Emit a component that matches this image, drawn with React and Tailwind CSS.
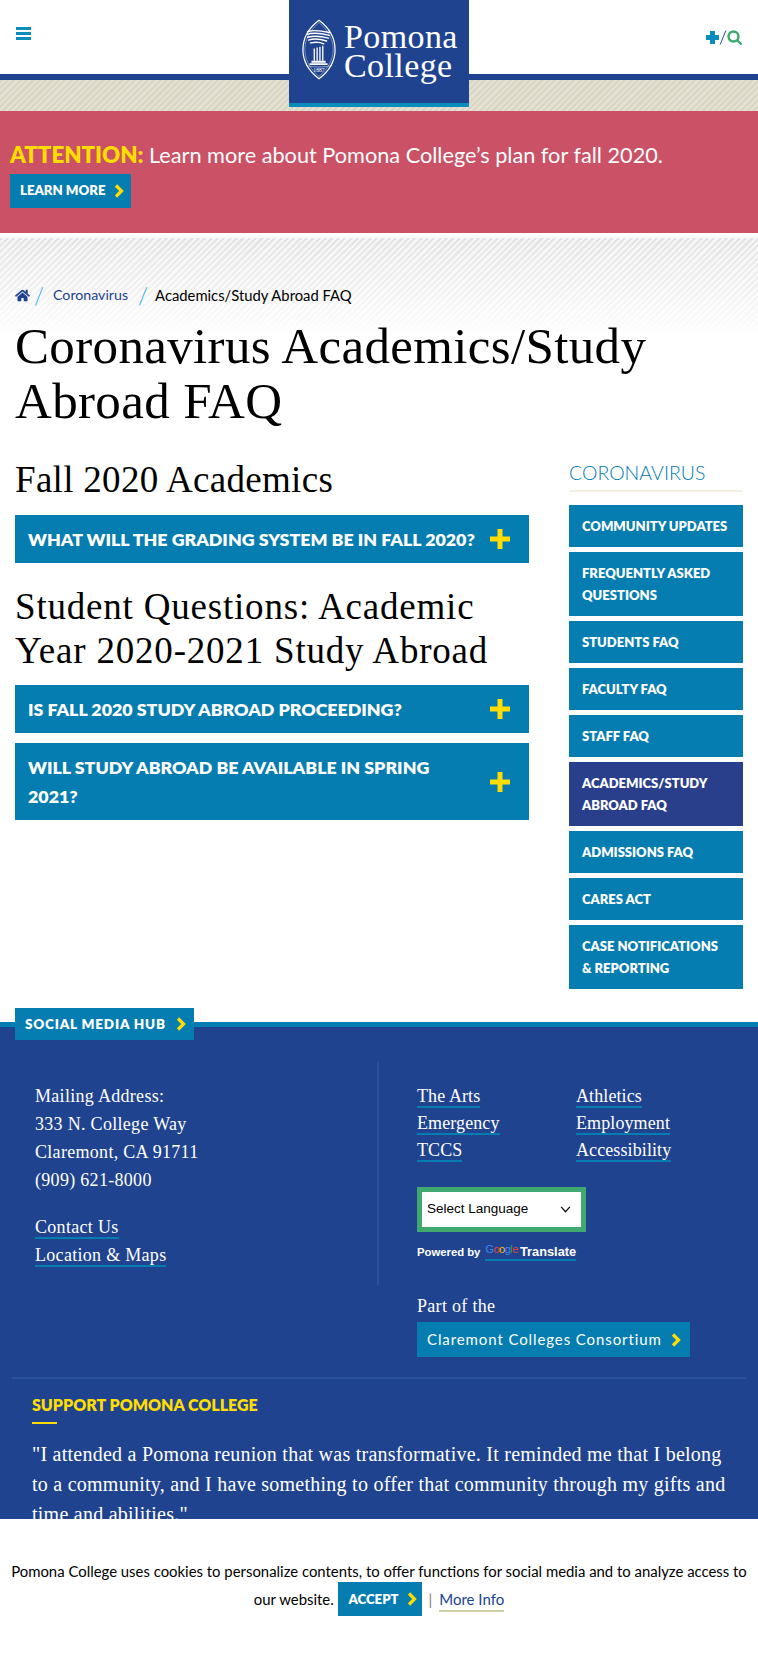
import React from "react";
import { FaHome } from "react-icons/fa";

const Chevron = ({ className = "w-[10px] h-[14px]" }) => (
  <svg viewBox="0 0 10 14" className={`${className} shrink-0`} fill="none" stroke="#ffdd00" strokeWidth="3.2">
    <path d="M2 1.500 L7.500 7 L2 12.500" />
  </svg>
);

const Plus = () => (
  <svg viewBox="0 0 20 20" className="w-5 h-5 shrink-0" fill="#ffdd00">
    <path d="M7.500 0h5v7.500H20v5h-7.500V20h-5v-7.500H0v-5h7.500z" />
  </svg>
);

const Seal = () => (
  <svg viewBox="0 0 36 64" className="w-[34px] h-[63px] shrink-0" fill="none" stroke="#fff">
    <path d="M18 1 C6 10 1 21 1 32 C1 43 6 54 18 63 C30 54 35 43 35 32 C35 21 30 10 18 1Z" strokeWidth="1.3" />
    <path d="M18 3.500 C8 12 3 22 3 32 C3 42 8 52 18 60.500 C28 52 33 42 33 32 C33 22 28 12 18 3.500Z" strokeWidth="0.4" />
    <g strokeWidth="1.500" strokeLinecap="round">
      <path d="M6 13 C12 11 20 12 29 14" />
      <path d="M5 16 C12 14 21 15 29 17" />
      <path d="M6 19 C13 17 21 18 28 20" />
      <path d="M7 22 C13 20 20 21 26 23" />
      <path d="M9 25 C14 24 19 24 23 26" />
    </g>
    <g strokeWidth="1.400">
      <path d="M13 31 V44" />
      <path d="M16 30 V44" />
      <path d="M19 29 V44" />
      <path d="M22 28 V44" />
    </g>
    <path d="M10 44 H25 V46 H10Z M8 46.500 H27 V48.500 H8Z" fill="#fff" stroke="none" />
    <path d="M4 49 C12 51 24 51 32 49" strokeWidth="0.5" />
    <text x="18" y="56" textAnchor="middle" fontSize="6" fill="#fff" stroke="none" fontFamily="Liberation Serif, serif">1887</text>
  </svg>
);

const FooterLink = ({ children }) => (
  <a className="border-b-2 border-[#057db1] leading-[20px] inline-block">{children}</a>
);

const futura = "font-['Lato',sans-serif]";
const serif = "font-['Liberation_Serif',serif]";

const side = [
  ["COMMUNITY UPDATES", false],
  ["FREQUENTLY ASKED QUESTIONS", false],
  ["STUDENTS FAQ", false],
  ["FACULTY FAQ", false],
  ["STAFF FAQ", false],
  ["ACADEMICS/STUDY ABROAD FAQ", true],
  ["ADMISSIONS FAQ", false],
  ["CARES ACT", false],
  ["CASE NOTIFICATIONS & REPORTING", false],
];

const Accordion = ({ children }) => (
  <div className={`bg-[#057db1] text-white font-extrabold ${futura} text-[17.800px] leading-[29px] pl-[13px] pr-[19px] py-[9.500px] flex items-center justify-between gap-3`}>
    <span>{children}</span>
    <Plus />
  </div>
);

export default function App() {
  return (
    <div className={`relative h-[1656px] w-full overflow-hidden bg-white ${futura}`}>
      <header className="relative">
        <div className="h-[74px] bg-white flex items-start justify-between pl-4 pr-[16px]">
          <div className="mt-[27px] flex flex-col gap-[2px] w-[15px]">
            <span className="h-[3px] bg-[#0a8cbc]" />
            <span className="h-[3px] bg-[#0a8cbc]" />
            <span className="h-[3px] bg-[#0a8cbc]" />
          </div>
          <div className="mt-[30px] flex items-center">
            <svg viewBox="0 0 13 13" className="w-[13px] h-[13px]" fill="#0a8cbc"><path d="M4 0h5v4h4v5H9v4H4V9H0V4h4z" /></svg>
            <svg viewBox="0 0 8 16" className="w-2 h-[15px]"><path d="M7 0.500 L1 15.500" stroke="#20438f" strokeWidth="1" /></svg>
            <svg viewBox="0 0 15 15" className="w-[15px] h-[15px]" fill="none" stroke="#3fa96f" strokeWidth="2.400"><circle cx="6.500" cy="6.500" r="5" /><path d="M10 10 L14.500 14.500" /></svg>
          </div>
        </div>
        <div className="h-[6px] bg-[#20438f]" />
        <div className="h-[31px] bg-[repeating-linear-gradient(135deg,#d9d6c6_0,#d9d6c6_2.250px,#e4e1d3_2.250px,#e4e1d3_4.500px)]" />
        <div className="absolute left-[289px] top-0 w-[180px] h-[107px] bg-[#20438f] border-b-4 border-[#0a8cbc] flex items-start pl-[13px] pt-[18px] gap-[8px]">
          <Seal />
          <div className={`${serif} text-white text-[34px] leading-[29px] mt-[4px] tracking-[0.4px]`}>
            <div>Pomona</div>
            <div>College</div>
          </div>
        </div>
      </header>

      <section className="h-[122px] bg-[#cb5166] pl-[10px] pt-[29px]">
        <div className="text-[21.700px] leading-[30px] text-white whitespace-nowrap">
          <span className="font-extrabold text-[22.300px] text-[#ffdd00]">ATTENTION:</span> Learn more about Pomona College’s plan for fall 2020.
        </div>
        <a className="mt-[4px] h-[34px] w-[121px] bg-[#057db1] text-white font-extrabold text-[13.200px] flex items-center pl-[10px] gap-[9px]">
          LEARN MORE <Chevron />
        </a>
      </section>

      <div className="h-[5px] bg-white" />

      <main className="bg-[linear-gradient(to_bottom,transparent_0,#ffffff_100px),repeating-linear-gradient(135deg,#e4e4e4_0,#e4e4e4_2.250px,#f6f6f6_2.250px,#f6f6f6_4.500px)] bg-[length:100%_100px,100%_100px] bg-no-repeat px-[15px] pt-[47px]">
        <nav className="flex items-center h-[20px] text-black">
          <FaHome className="text-[#20438f] w-[15px] h-[15px]" />
          <span className="text-[#2aa8e8] text-[23px] font-light ml-[4px] mr-[9px]">/</span>
          <a className="text-[#20438f] text-[14.200px]">Coronavirus</a>
          <span className="text-[#2aa8e8] text-[23px] font-light ml-[10px] mr-[7px]">/</span>
          <span className="text-[14.800px]">Academics/Study Abroad FAQ</span>
        </nav>
        <h1 className={`${serif} text-[51px] leading-[55px] text-black mt-[14px] tracking-[0.35px]`}>
          Coronavirus Academics/Study Abroad FAQ
        </h1>
        <div className="flex justify-between mt-[28px]">
          <div className="w-[514px] pt-[1px]">
            <h2 className={`${serif} text-[37px] leading-[44px] text-black tracking-[0.3px]`}>Fall 2020 Academics</h2>
            <div className="mt-[13px]"><Accordion>WHAT WILL THE GRADING SYSTEM BE IN FALL 2020?</Accordion></div>
            <h2 className={`${serif} text-[37px] leading-[44px] text-black tracking-[0.8px] max-w-[490px] mt-[22px]`}>
              Student Questions: Academic Year 2020-2021 Study Abroad
            </h2>
            <div className="mt-[12px] flex flex-col gap-[10px]">
              <Accordion>IS FALL 2020 STUDY ABROAD PROCEEDING?</Accordion>
              <Accordion>WILL STUDY ABROAD BE AVAILABLE IN SPRING 2021?</Accordion>
            </div>
          </div>
          <aside className="w-[174px]">
            <div className="text-[#057db1] text-[19.500px] font-light leading-[32px] pb-[1px] border-b-2 border-[#f3efe4]">CORONAVIRUS</div>
            <div className="mt-[13px] flex flex-col gap-[5px]">
              {side.map(([t, active]) => (
                <a key={t} className={`${active ? "bg-[#2a3f8c]" : "bg-[#057db1]"} text-white font-extrabold text-[13px] leading-[22px] px-[13px] py-[10px]`}>{t}</a>
              ))}
            </div>
          </aside>
        </div>
      </main>

      <footer className={`relative mt-[33px] border-t-[5px] border-[#057db1] bg-[#20438f] text-white ${serif}`}>
        <a className={`absolute left-[15px] -top-[19px] h-[32px] w-[179px] bg-[#057db1] flex items-center pl-[10px] gap-[10px] ${futura} font-extrabold text-[13.500px] tracking-[0.8px]`}>
          SOCIAL MEDIA HUB <Chevron />
        </a>
        <div className="flex pt-[35px]">
          <div className="w-[379px] h-[223px] border-r-2 border-[#2a5299] pl-[35px] pt-[20px] text-[18px] leading-[28px] tracking-[0.3px]">
            <p>Mailing Address:</p>
            <p>333 N. College Way</p>
            <p>Claremont, CA 91711</p>
            <p>(909) 621-8000</p>
            <div className="mt-[19px] flex flex-col items-start">
              <div className="h-[28px]"><FooterLink>Contact Us</FooterLink></div>
              <div className="h-[28px]"><FooterLink>Location &amp; Maps</FooterLink></div>
            </div>
          </div>
          <div className="pl-[38px] pt-[23px]">
            <div className="grid grid-cols-[159px_1fr] gap-y-[5px] text-[18px] leading-[22px] tracking-[0.1px]">
              {["The Arts", "Athletics", "Emergency", "Employment", "TCCS", "Accessibility"].map((t) => (
                <div key={t} className="h-[22px]"><FooterLink>{t}</FooterLink></div>
              ))}
            </div>
            <div className="mt-[26px] w-[169px] h-[45px] border-[5px] border-[#3fa96f] bg-white flex items-center justify-between pl-[5px] pr-[10px] text-black font-['Liberation_Sans',sans-serif] text-[13.500px]">
              <span>Select Language</span>
              <svg viewBox="0 0 12 8" className="w-[11px] h-[7px]" fill="none" stroke="#111" strokeWidth="1.500"><path d="M1 1 L6 6.500 L11 1" /></svg>
            </div>
            <div className="mt-[12px] flex items-center font-['Liberation_Sans',sans-serif] font-bold text-[11.300px] leading-[15px]">
              <span>Powered by</span>
              <span className="ml-[5px] inline-flex items-center border-b-2 border-[#057db1]">
                <span className="font-normal text-[11px] tracking-[-0.5px] -mt-1 mr-[2px]">
                  <span className="text-[#4285f4]">G</span><span className="text-[#ea4335]">o</span><span className="text-[#fbbc05]">o</span><span className="text-[#4285f4]">g</span><span className="text-[#34a853]">l</span><span className="text-[#ea4335]">e</span>
                </span>
                <span className="text-[12.800px]">Translate</span>
              </span>
            </div>
          </div>
        </div>
        <div className="pl-[417px] pt-[9px]">
          <p className="text-[18px] leading-[24px] tracking-[0.3px]">Part of the</p>
          <a className={`mt-[4px] h-[35px] w-[273px] bg-[#057db1] flex items-center pl-[10px] gap-[9px] ${futura} text-[15px] tracking-[0.9px]`}>
            Claremont Colleges Consortium <Chevron />
          </a>
        </div>
        <div className="mx-3 mt-[20px] h-[2px] bg-[#2a5299]" />
        <div className="pl-[32px] pr-[20px] pt-[14px]">
          <h3 className={`${futura} font-extrabold text-[#ffdd00] text-[16px] leading-[24px]`}>SUPPORT POMONA COLLEGE</h3>
          <div className="w-[25px] h-[2px] bg-[#ffdd00] mt-[5px]" />
          <p className="mt-[15px] text-[20px] leading-[30px] tracking-[0.25px]">
            "I attended a Pomona reunion that was transformative. It reminded me that I belong to a community, and I have something to offer that community through my gifts and time and abilities."
          </p>
        </div>
      </footer>

      <div className="absolute inset-x-0 bottom-0 h-[137px] bg-white pt-[38px] px-[8px] text-center text-[14.900px] text-black leading-[28px]">
        <span>Pomona College uses cookies to personalize contents, to offer functions for social media and to analyze access to our website. </span>
        <a className="inline-flex h-[34px] w-[84px] align-middle -mt-[5px] -mb-[1px] bg-[#057db1] text-white font-extrabold text-[13.200px] items-center pl-[10px] gap-[8px] ml-[1px] mr-[6px]">
          ACCEPT <Chevron />
        </a>
        <span className="text-[#777] mr-[7px]">|</span>
        <a className="text-[#20438f] text-[15px] border-b-2 border-[#cfcfa9] leading-[22px] inline-block">More Info</a>
      </div>
    </div>
  );
}
